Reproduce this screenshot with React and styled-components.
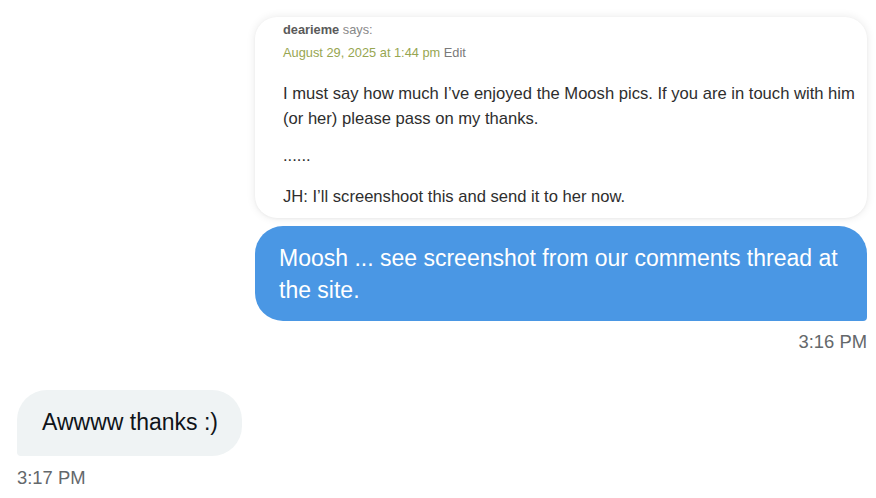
import React from "react";
import styled, { createGlobalStyle } from "styled-components";

const Global = createGlobalStyle`
  html, body { margin: 0; padding: 0; background: #ffffff; }
  body { font-family: "Liberation Sans", Arial, sans-serif; }
`;

const Page = styled.div`
  width: 876px;
  height: 498px;
  box-sizing: border-box;
  padding: 17px 9px 0 17px;
  display: flex;
  flex-direction: column;
  overflow: hidden;
`;

const SentGroup = styled.div`
  display: flex;
  flex-direction: column;
  align-items: flex-end;
  gap: 8px;
`;

const QuoteCard = styled.div`
  width: 612px;
  box-sizing: border-box;
  background: #ffffff;
  border-radius: 22px;
  box-shadow: 0 0 10px rgba(0, 0, 0, 0.09), 0 1px 3px rgba(0, 0, 0, 0.04);
  padding: 2px 6px 9px 28px;
  font-family: "Liberation Sans", Arial, sans-serif;
`;

const MetaLine = styled.div`
  font-size: 12.8px;
  line-height: 22px;
  margin-top: ${(p) => p.$top || 0}px;
  color: ${(p) => p.$color || "#888"};
  white-space: nowrap;
`;

const Author = styled.span`
  font-weight: bold;
  color: #5a5a5a;
`;

const Muted = styled.span`
  color: ${(p) => p.$color || "#888"};
`;

const Para = styled.p`
  margin: ${(p) => p.$top}px 0 0 0;
  font-size: 16.6px;
  line-height: 25px;
  color: #2e2e2e;
`;

const Bubble = styled.div`
  box-sizing: border-box;
  font-family: "Liberation Sans", Arial, sans-serif;
  font-size: 23px;
  line-height: 32px;
  ${(p) =>
    p.$sent
      ? `
    width: 612px;
    background: #4a97e4;
    color: #ffffff;
    border-radius: 28px 28px 4px 28px;
    padding: 16px 20px 15px 24px;
  `
      : `
    align-self: flex-start;
    background: #eff3f4;
    color: #0f1419;
    border-radius: 30px 30px 30px 4px;
    padding: 18px 24px 20px 25px;
    line-height: 28px;
  `}
`;

const Time = styled.div`
  font-family: "Liberation Sans", Arial, sans-serif;
  font-size: 18.4px;
  line-height: 22px;
  color: #64686b;
  margin-top: ${(p) => p.$top || 0}px;
  align-self: ${(p) => (p.$right ? "flex-end" : "flex-start")};
`;

const ReceivedGroup = styled.div`
  display: flex;
  flex-direction: column;
  margin-top: 37px;
`;

export default function App() {
  return (
    <>
      <Global />
      <Page>
        <SentGroup>
          <QuoteCard>
            <MetaLine>
              <Author>dearieme</Author> <Muted>says:</Muted>
            </MetaLine>
            <MetaLine $top={1} $color="#97a651">
              August 29, 2025 at 1:44 pm <Muted $color="#7a7a7a">Edit</Muted>
            </MetaLine>
            <Para $top={17}>
              I must say how much I’ve enjoyed the Moosh pics. If you are in touch with him (or her) please pass on my thanks.
            </Para>
            <Para $top={12}>......</Para>
            <Para $top={16}>JH: I’ll screenshoot this and send it to her now.</Para>
          </QuoteCard>
          <Bubble $sent>Moosh ... see screenshot from our comments thread at the site.</Bubble>
        </SentGroup>
        <Time $right $top={10}>3:16 PM</Time>
        <ReceivedGroup>
          <Bubble>Awwww thanks :)</Bubble>
          <Time $top={11}>3:17 PM</Time>
        </ReceivedGroup>
      </Page>
    </>
  );
}
